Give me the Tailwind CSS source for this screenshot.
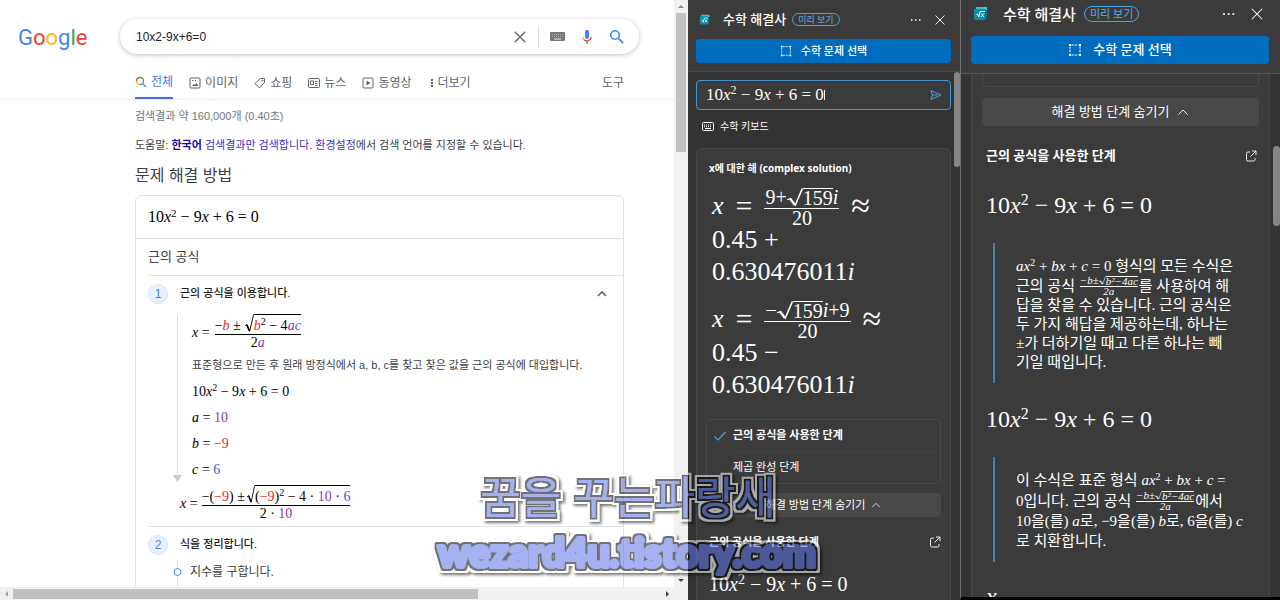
<!DOCTYPE html>
<html lang="ko">
<head>
<meta charset="utf-8">
<meta name="viewport" content="width=device-width, initial-scale=1">
<title>10x2-9x+6=0 - 검색</title>
<script src="https://cdn.jsdelivr.net/npm/@tailwindcss/browser@4"></script>
</head>
<body class="relative grid h-screen grid-cols-[688fr_272fr_320fr] overflow-hidden bg-[#333333] font-['Liberation_Sans','Noto_Sans_CJK_KR',sans-serif]">

<!-- Shared symbols -->
<svg class="hidden" aria-hidden="true">
  <symbol id="rad" viewBox="0 0 10 20" preserveAspectRatio="none"><path d="M0 12.5L2.2 11L5.2 18L9.6 .5" fill="none" stroke="currentColor" stroke-width="1"/><path d="M2 11.4L5 18" stroke="currentColor" stroke-width="1.6"/></symbol>
  <symbol id="solver" viewBox="0 0 16 16"><path d="M3 1h11v3H3z" fill="#35c3d0"/><path d="M1 3h11v11H3a2 2 0 0 1-2-2z" fill="#0e8ea3"/><path d="M12 4h2v8l-2 2z" fill="#0b6b86"/><path d="M3.500 8.500l1-.5 1.300 3L7 5.500h5M8 7.500l3 3.500M11 7.500L8 11" fill="none" stroke="#e8fbff" stroke-width="1"/></symbol>
  <symbol id="select" viewBox="0 0 14 14"><path d="M3.500 2h7M3.500 12h7M2 3.500v7M12 3.500v7" fill="none" stroke="currentColor" stroke-width="1" stroke-dasharray="2.200 1"/><path d="M1 1h2v2H1zM11 1h2v2h-2zM1 11h2v2H1zM11 11h2v2h-2z" fill="currentColor"/></symbol>
  <symbol id="dots" viewBox="0 0 12 12"><path d="M1 5.300h1.500v1.500H1zM5 5.300h1.500v1.500H5zM9 5.300h1.500v1.500H9z" fill="currentColor"/></symbol>
  <symbol id="close" viewBox="0 0 12 12"><path d="M1.500 1.500l9 9M10.500 1.500l-9 9" stroke="currentColor" stroke-width=".9"/></symbol>
  <symbol id="up" viewBox="0 0 12 12"><path d="M1.500 8.500L6 4l4.500 4.500" fill="none" stroke="currentColor" stroke-width=".9"/></symbol>
  <symbol id="open" viewBox="0 0 12 12"><path d="M5 2H3a1.500 1.500 0 0 0-1.500 1.500v6A1.500 1.500 0 0 0 3 11h5.500A1.500 1.500 0 0 0 10 9.500V8M7 1h4v4M11 1L5.500 6.500" fill="none" stroke="currentColor" stroke-width=".9"/></symbol>
</svg>

<!-- Search results -->
<main class="flex min-w-0 flex-col overflow-hidden bg-white">
  <div class="flex min-h-0 flex-1">
    <div class="min-w-0 flex-1 overflow-hidden">
      <header class="flex items-center pt-[19px]">
        <a href="#" aria-label="Google" class="ml-[18px] w-[102px] pt-[2px] font-['Roboto',sans-serif] text-[22px] leading-[33px]"><span class="text-[#4285f4]">G</span><span class="text-[#ea4335]">o</span><span class="text-[#fbbc05]">o</span><span class="text-[#4285f4]">g</span><span class="text-[#34a853]">l</span><span class="text-[#ea4335]">e</span></a>
        <form class="mr-[35px] flex h-[35px] flex-1 items-center rounded-full bg-white pr-[14px] pl-4 shadow-[0_1px_5px_rgba(32,33,36,0.28)]">
          <input type="text" aria-label="검색" value="10x2-9x+6=0" class="min-w-0 flex-1 text-[12px] text-[#202124] outline-none">
          <button type="button" aria-label="지우기" class="text-[#70757a]"><svg class="size-[14px]" viewBox="0 0 12 12"><path d="M1.500 1.500l9 9M10.500 1.500l-9 9" stroke="currentColor" stroke-width="1.400"/></svg></button>
          <span class="mx-[11px] h-[22px] w-px bg-[#dadce0]"></span>
          <button type="button" aria-label="키보드"><svg class="h-[9px] w-[15px]" viewBox="0 0 15 9"><rect width="15" height="9" rx="1" fill="#777"/><path d="M2 2.500h11M2 4.500h11" stroke="#aaa" stroke-dasharray="1 1"/><path d="M4 7h7" stroke="#eee"/></svg></button>
          <button type="button" aria-label="음성 검색" class="ml-[14px]"><svg class="size-4" viewBox="0 0 24 24"><path fill="#4285f4" d="M12 15c1.700 0 3-1.300 3-3V4c0-1.700-1.300-3-3-3S9 2.300 9 4v8c0 1.700 1.300 3 3 3z"/><path fill="#34a853" d="M11 19h2v4h-2z"/><path fill="#fbbc05" d="M7 12H5c0 1.900.8 3.700 2 5l1.500-1.400C7.500 14.700 7 13.400 7 12z"/><path fill="#ea4335" d="M12 17c-1.400 0-2.600-.6-3.500-1.500L7 17c1.300 1.300 3 2 5 2 3.900 0 7-3.100 7-7h-2c0 2.800-2.200 5-5 5z"/></svg></button>
          <button type="submit" aria-label="검색하기" class="ml-[14px]"><svg class="size-4" viewBox="0 0 16 16"><circle cx="6" cy="6" r="4.300" fill="none" stroke="#4285f4" stroke-width="1.600"/><path d="M9.200 9.200l5 5" stroke="#4285f4" stroke-width="1.800"/></svg></button>
        </form>
      </header>
      <nav class="mt-3 flex h-[34px] border-b border-[#ebebeb] pr-[50px] pl-[135px] text-[12px] text-[#5f6368]">
        <a href="#" class="mr-4 flex items-center gap-1 border-b-2 border-[#3f6fe0] text-[#3f74e8]"><svg class="size-3" viewBox="0 0 12 12" fill="none" stroke-width="1.300"><path d="M1.500 5A3.500 3.500 0 0 1 5 1.500" stroke="#ea4335"/><path d="M5 1.500A3.500 3.500 0 0 1 8.500 5" stroke="#34a853"/><path d="M8.500 5A3.500 3.500 0 0 1 5 8.500M7.500 7.500l3.500 3.500" stroke="#4285f4"/><path d="M5 8.500A3.500 3.500 0 0 1 1.500 5" stroke="#fbbc05"/></svg>전체</a>
        <a href="#" class="mr-4 flex items-center gap-1"><svg class="size-3" viewBox="0 0 12 12" fill="none" stroke="currentColor"><rect x="1" y="1" width="10" height="10" rx="1"/><path d="M3 9l2-2 1 1 1.500-2L9.500 9z" fill="currentColor" stroke="none"/><path d="M3 3.500h1.500M6 3.500h1"/></svg>이미지</a>
        <a href="#" class="mr-4 flex items-center gap-1"><svg class="size-3" viewBox="0 0 12 12" fill="none" stroke="currentColor"><path d="M6.500 1.500h4v4L5.500 11 1 6.500z" stroke-linejoin="round"/><circle cx="8.500" cy="3.500" r=".5"/></svg>쇼핑</a>
        <a href="#" class="mr-4 flex items-center gap-1"><svg class="size-3" viewBox="0 0 12 12" fill="none" stroke="currentColor"><rect x=".5" y="1.500" width="11" height="9" rx="1"/><path d="M2.500 4h3v3.500h-3zM7 4.500h2.500M7 6.500h2.500M7 8.500h2.500"/></svg>뉴스</a>
        <a href="#" class="mr-[18px] flex items-center gap-1"><svg class="size-3" viewBox="0 0 12 12" fill="none" stroke="currentColor"><rect x="1" y="1" width="10" height="10" rx="1"/><path d="M4.500 3.500v5L8.500 6z" fill="currentColor" stroke="none"/></svg>동영상</a>
        <a href="#" class="flex items-center gap-1"><svg class="h-3 w-1" viewBox="0 0 4 12" fill="currentColor"><path d="M1 2h2v2H1zM1 5h2v2H1zM1 8h2v2H1z"/></svg>더보기</a>
        <a href="#" class="ml-auto flex items-center">도구</a>
      </nav>
      <div class="pr-[50px] pl-[135px]">
        <p class="mt-[7px] text-[11px] leading-[18px] text-[#70757a]">검색결과 약 160,000개 (0.40초)</p>
        <p class="mt-[11px] text-[11px] leading-[18px] whitespace-nowrap text-[#3c4043]">도움말: <a href="#" class="text-[#1a0dab]"><b>한국어</b></a> <a href="#" class="text-[#4130c4]">검색결과만 검색합니다.</a> <a href="#" class="text-[#4130c4]">환경설정</a>에서 검색 언어를 지정할 수 있습니다.</p>
        <h2 class="mt-[10px] text-[16px] leading-6 text-[#3c4043]">문제 해결 방법</h2>
        <section class="mt-[7px] h-[440px] rounded-t-md border border-[#dfe1e5]">
          <div class="flex h-[43px] items-center border-b border-[#dfe1e5] pl-3 font-['Liberation_Serif',serif] text-[16px] text-black"><span>10<i>x</i><sup class="text-[11px]">2</sup> − 9<i>x</i> + 6 = 0</span></div>
          <div class="ml-3 flex h-[37px] items-center border-b border-[#dfe1e5] text-[13px] text-[#3c4043]">근의 공식</div>
          <div class="ml-3">
            <div class="flex h-[35px] items-center pr-[15px] text-[11px] font-medium text-[#202124]">
              <span class="mr-3 flex size-5 items-center justify-center rounded-full border border-[#d2e3fc] bg-[#e8f0fe] text-[12px] font-normal text-[#4285f4]">1</span>근의 공식을 이용합니다.
              <button type="button" aria-label="접기" class="ml-auto text-[#5f6368]"><svg class="size-3" viewBox="0 0 12 12"><path d="M2 8l4-4 4 4" fill="none" stroke="currentColor" stroke-width="1.600"/></svg></button>
            </div>
            <div class="flex font-['Liberation_Serif','Noto_Sans_CJK_KR',serif] text-[14px] whitespace-nowrap text-black">
              <div class="mt-1 ml-[25px] flex h-[167px] w-[9px] flex-col items-center"><span class="w-px flex-1 bg-[#dadce0]"></span><svg class="h-[7px] w-[9px]" viewBox="0 0 9 7"><path d="M0 0h9L4.500 7z" fill="#c8cacd"/></svg></div>
              <div class="ml-[10px]">
                <div class="flex h-[42px] items-center gap-[5px]"><span><i>x</i> =</span>
                  <span class="flex flex-col items-center leading-4"><span class="flex border-b border-black"><span class="pt-1">−<i class="text-[#d93025]">b</i> ±</span><svg class="ml-1 h-[19px] w-[9px]"><use href="#rad"/></svg><span class="border-t border-black pt-[3px]"><i class="text-[#d93025]">b</i><sup class="text-[10px]">2</sup> − 4<i class="text-[#9334a6]">a</i><i class="text-[#3b5bdb]">c</i></span></span><span>2<i class="text-[#9334a6]">a</i></span></span>
                </div>
                <p class="mt-1 font-['Liberation_Sans','Noto_Sans_CJK_KR',sans-serif] text-[11px] leading-[16px] text-[#3c4043]">표준형으로 만든 후 원래 방정식에서 a, b, c를 찾고 찾은 값을 근의 공식에 대입합니다.</p>
                <p class="mt-[6px] leading-[26px]">10<i>x</i><sup class="text-[10px]">2</sup> − 9<i>x</i> + 6 = 0</p>
                <p class="leading-[26px]"><i>a</i> = <span class="text-[#9334a6]">10</span></p>
                <p class="leading-[26px]"><i>b</i> = <span class="text-[#d93025]">−9</span></p>
                <p class="leading-[26px]"><i>c</i> = <span class="text-[#3b5bdb]">6</span></p>
              </div>
            </div>
            <div class="ml-8 flex h-[40px] items-center gap-1 font-['Liberation_Serif',serif] text-[14px] whitespace-nowrap text-black"><span><i>x</i> =</span>
              <span class="flex flex-col items-center leading-4"><span class="flex border-b border-black"><span class="pt-1">−(<span class="text-[#d93025]">−9</span>) ±</span><svg class="ml-[2px] h-[19px] w-2"><use href="#rad"/></svg><span class="border-t border-black pt-[3px]">(<span class="text-[#d93025]">−9</span>)<sup class="text-[10px]">2</sup> − 4 · <span class="text-[#9334a6]">10</span> · <span class="text-[#3b5bdb]">6</span></span></span><span>2 · <span class="text-[#9334a6]">10</span></span></span>
            </div>
            <div class="mt-[3px] flex h-[36px] items-center border-t border-[#dfe1e5] text-[11px] font-medium text-[#202124]"><span class="mr-3 flex size-5 items-center justify-center rounded-full border border-[#d2e3fc] bg-[#e8f0fe] text-[12px] font-normal text-[#4285f4]">2</span>식을 정리합니다.</div>
            <div class="flex text-[12px] text-[#3c4043]"><svg class="ml-[25px] h-[26px] w-[9px]" viewBox="0 0 9 26"><path d="M4.500 0v26" stroke="#dadce0"/><circle cx="4.500" cy="10" r="3.500" fill="#fff" stroke="#4285f4"/></svg><span class="ml-2 leading-5">지수를 구합니다.</span></div>
          </div>
        </section>
      </div>
    </div>
    <div class="flex w-[14px] flex-col items-center justify-between bg-[#f1f1f1]" aria-hidden="true">
      <svg class="h-[13px] w-[6px]" viewBox="0 0 6 13"><path d="M0 8h6L3 5z" fill="#8b8b8b"/></svg>
      <span class="h-[139px] w-[10px] bg-[#c1c1c1]"></span>
      <span class="flex-1"></span>
      <svg class="h-[13px] w-[6px]" viewBox="0 0 6 13"><path d="M0 5h6L3 8z" fill="#444"/></svg>
    </div>
  </div>
  <div class="flex h-[13px] items-center bg-[#f1f1f1] pr-[14px]" aria-hidden="true">
    <svg class="h-[6px] w-[13px]" viewBox="0 0 13 6"><path d="M8 0v6L5 3z" fill="#a3a3a3"/></svg>
    <span class="h-[10px] w-[69%] bg-[#c1c1c1]"></span><span class="flex-1"></span>
    <svg class="h-[6px] w-[13px]" viewBox="0 0 13 6"><path d="M5 0v6l3-3z" fill="#444"/></svg>
  </div>
</main>

<!-- Math solver, top of the pane -->
<aside class="flex min-w-0 flex-col overflow-hidden bg-[#333333] font-['Noto_Sans','Noto_Sans_CJK_KR',sans-serif] text-white">
  <header class="flex h-[72px] flex-col border-b border-[#4a4a4a] bg-[#3b3b3b] pr-[9px] pl-2">
    <div class="flex h-[39px] items-center pr-[5px] pl-[3px]"><svg class="size-3"><use href="#solver"/></svg><h2 class="ml-3 text-[13px] font-medium">수학 해결사</h2><span class="ml-[6px] rounded-full border border-[#4da3e0] px-[5px] text-[9px] leading-[11px] text-[#5caee8]">미리 보기</span>
      <button type="button" aria-label="더보기" class="ml-auto"><svg class="size-3"><use href="#dots"/></svg></button><button type="button" aria-label="닫기" class="ml-3"><svg class="size-3"><use href="#close"/></svg></button></div>
    <button type="button" class="flex h-6 items-center justify-center gap-[9px] rounded-sm bg-[#006cbe] text-[11px] font-medium"><svg class="size-3"><use href="#select"/></svg>수학 문제 선택</button>
  </header>
  <div class="flex min-h-0 flex-1">
    <div class="min-w-0 flex-1 overflow-hidden pt-2 pr-[3px] pl-2">
      <div class="flex h-[30px] items-center rounded-sm border border-[#4494d0] bg-[#3b3b3b] pr-2 pl-[9px]">
        <div role="textbox" tabindex="0" aria-label="수식" class="flex-1 font-['Liberation_Serif',serif] text-[17px] whitespace-nowrap">10<i>x</i><sup class="text-[12px]">2</sup> − 9<i>x</i> + 6 = 0<span class="inline-block h-[10px] w-px bg-white"></span></div>
        <button type="button" aria-label="풀기" class="text-[#4aa0e0]"><svg class="size-3" viewBox="0 0 12 12"><path d="M1 1.500L11 6 1 10.500 2.500 6zM2.500 6H8" fill="none" stroke="currentColor"/></svg></button>
      </div>
      <button type="button" class="flex h-[33px] items-center gap-[6px] pl-[6px] text-[10px]"><svg class="h-[9px] w-3" viewBox="0 0 12 9" fill="none" stroke="currentColor"><rect x=".5" y=".5" width="11" height="8" rx="1"/><path d="M2 3h8M2 4.700h8" stroke-dasharray="1 1"/><path d="M3 6.500h6"/></svg>수학 키보드</button>
      <section class="mt-[5px] h-[500px] rounded-t-md border border-[#474747] bg-[#3b3b3b] px-[9px]">
        <h3 class="mt-[11px] ml-[3px] text-[10px] leading-4 font-bold">x에 대한 해 (complex solution)</h3>
        <div class="mt-3 ml-[6px] font-['Liberation_Serif',serif] text-[26px] leading-8">
          <div class="flex h-[36px] items-center gap-3"><i>x</i><span class="text-[30px]">=</span><span class="flex flex-col items-center pt-[2px] text-[20px] leading-[18px]"><span class="flex border-b border-white px-px pb-px"><span>9+</span><svg class="h-[19px] w-4"><use href="#rad"/></svg><span class="border-t border-white">159</span><i>i</i></span><span>20</span></span><span class="text-[34px]">≈</span></div>
          <p>0.45 +</p><p>0.630476011<i>i</i></p>
          <div class="mt-[13px] flex h-[36px] items-center gap-3"><i>x</i><span class="text-[30px]">=</span><span class="flex flex-col items-center pt-[2px] text-[20px] leading-[18px]"><span class="flex border-b border-white px-px pb-px"><span>−</span><svg class="h-[19px] w-4"><use href="#rad"/></svg><span class="border-t border-white">159</span><i>i</i>+9</span><span>20</span></span><span class="text-[34px]">≈</span></div>
          <p>0.45 −</p><p>0.630476011<i>i</i></p>
        </div>
        <ul class="mt-[18px] rounded-sm border border-[#484848] text-[11px]">
          <li class="flex h-8 items-center font-bold"><svg class="mx-[7px] size-3" viewBox="0 0 12 12"><path d="M.5 6.500L4 10l7.500-8" fill="none" stroke="#4aa0e0" stroke-width="1.200"/></svg><span class="flex h-full flex-1 items-center border-b border-[#444444]">근의 공식을 사용한 단계</span></li>
          <li class="flex h-[31px] items-center pl-[26px]">제곱 완성 단계</li>
        </ul>
        <button type="button" class="mt-[9px] flex h-6 w-full items-center justify-center gap-[6px] rounded-sm bg-[#484848] text-[11px]">해결 방법 단계 숨기기<svg class="size-[10px]"><use href="#up"/></svg></button>
        <div class="mt-4 flex h-[18px] items-center justify-between pl-[3px]"><h3 class="text-[11px] font-bold">근의 공식을 사용한 단계</h3><a href="#" aria-label="새 창에서 열기"><svg class="size-3"><use href="#open"/></svg></a></div>
        <p class="mt-[17px] ml-[3px] font-['Liberation_Serif',serif] text-[20px] leading-8 whitespace-nowrap">10<i>x</i><sup class="text-[14px]">2</sup> − 9<i>x</i> + 6 = 0</p>
      </section>
    </div>
    <div class="w-[6px]" aria-hidden="true"><div class="h-[95px] rounded-full bg-[#858585]"></div></div>
  </div>
</aside>

<!-- Math solver, scrolled to the steps -->
<aside class="flex min-w-0 flex-col overflow-hidden border-b-3 border-l border-b-black border-l-[#707070] bg-[#333333] font-['Noto_Sans','Noto_Sans_CJK_KR',sans-serif] text-white">
  <header class="flex h-[74px] flex-col border-b border-[#555555] bg-[#3b3b3b] pr-[11px] pl-[10px]">
    <div class="flex h-[36px] items-start pt-[6px] pr-[5px] pl-[2px]"><div class="flex h-4 flex-1 items-center"><svg class="size-4"><use href="#solver"/></svg><h2 class="ml-[14px] text-[15px] font-medium">수학 해결사</h2><span class="ml-2 rounded-full border border-[#4da3e0] px-[5px] text-[11px] leading-[14px] text-[#5caee8]">미리 보기</span>
      <button type="button" aria-label="더보기" class="ml-auto"><svg class="size-[14px]"><use href="#dots"/></svg></button><button type="button" aria-label="닫기" class="ml-[14px]"><svg class="size-[14px]"><use href="#close"/></svg></button></div></div>
    <button type="button" class="flex h-7 items-center justify-center gap-[11px] rounded-sm bg-[#006cbe] text-[13px] font-medium"><svg class="size-[14px]"><use href="#select"/></svg>수학 문제 선택</button>
  </header>
  <div class="flex min-h-0 flex-1">
    <div class="min-w-0 flex-1 overflow-hidden pr-[3px] pl-[10px]">
      <section class="border-x border-[#474747] bg-[#3b3b3b] px-[10px]">
        <div class="h-[13px] rounded-b-sm border border-t-0 border-[#4a4a4a]"></div>
        <button type="button" class="mt-[11px] flex h-7 w-full items-center justify-center gap-2 rounded-sm bg-[#484848] text-[13px]">해결 방법 단계 숨기기<svg class="size-3"><use href="#up"/></svg></button>
        <div class="mt-5 flex h-5 items-center justify-between pr-[2px] pl-1"><h3 class="text-[13px] font-bold">근의 공식을 사용한 단계</h3><a href="#" aria-label="새 창에서 열기"><svg class="size-3"><use href="#open"/></svg></a></div>
        <p class="mt-[23px] ml-1 font-['Liberation_Serif',serif] text-[24px] leading-8 whitespace-nowrap">10<i>x</i><sup class="text-[16px]">2</sup> − 9<i>x</i> + 6 = 0</p>
        <blockquote class="mt-[22px] ml-[11px] h-[140px] border-l-2 border-[#4a7fa8] pt-[14px] pl-[21px] font-['Liberation_Serif','Noto_Sans_CJK_KR',serif] text-[15px] leading-[19px] whitespace-nowrap">
          <p><i>ax</i><sup class="text-[10px]">2</sup> + <i>bx</i> + <i>c</i> = 0 형식의 모든 수식은</p>
          <p class="flex h-5 items-center">근의 공식&nbsp;<span class="mx-px inline-flex flex-col items-center text-[11px] leading-[9px]"><span class="flex border-b border-white"><i>−b±</i><svg class="h-[9px] w-[7px]"><use href="#rad"/></svg><i class="border-t border-white">b²−4ac</i></span><i>2a</i></span>를 사용하여 해</p>
          <p>답을 찾을 수 있습니다. 근의 공식은</p><p>두 가지 해답을 제공하는데, 하나는</p><p>±가 더하기일 때고 다른 하나는 빼</p><p>기일 때입니다.</p>
        </blockquote>
        <p class="mt-5 ml-1 font-['Liberation_Serif',serif] text-[24px] leading-8 whitespace-nowrap">10<i>x</i><sup class="text-[16px]">2</sup> − 9<i>x</i> + 6 = 0</p>
        <blockquote class="mt-[22px] ml-[11px] h-[105px] border-l-2 border-[#4a7fa8] pt-[13px] pl-[21px] font-['Liberation_Serif','Noto_Sans_CJK_KR',serif] text-[15px] leading-5 whitespace-nowrap">
          <p>이 수식은 표준 형식 <i>ax</i><sup class="text-[10px]">2</sup> + <i>bx</i> + <i>c</i> =</p>
          <p class="flex h-[21px] items-center">0입니다. 근의 공식&nbsp;<span class="mx-px inline-flex flex-col items-center text-[11px] leading-[9px]"><span class="flex border-b border-white"><i>−b±</i><svg class="h-[9px] w-[7px]"><use href="#rad"/></svg><i class="border-t border-white">b²−4ac</i></span><i>2a</i></span>에서</p>
          <p>10을(를) <i>a</i>로, −9을(를) <i>b</i>로, 6을(를) <i>c</i></p><p>로 치환합니다.</p>
        </blockquote>
        <p class="mt-[18px] ml-1 font-['Liberation_Serif',serif] text-[24px] leading-8"><i>x</i></p>
      </section>
    </div>
    <div class="w-[7px] pt-[72px]" aria-hidden="true"><div class="h-20 rounded-full bg-[#858585]"></div></div>
  </div>
</aside>

<!-- Watermark over both panes -->
<svg class="pointer-events-none absolute bottom-[15px] left-[423px] h-[120px] w-[410px] opacity-55" viewBox="0 0 410 120">
  <defs>
    <filter id="outline" x="0" y="0" width="410" height="120" filterUnits="userSpaceOnUse">
      <feMorphology in="SourceAlpha" operator="dilate" radius="1.500" result="inner"/>
      <feMorphology in="SourceAlpha" operator="dilate" radius="3.500" result="outer"/>
      <feFlood flood-color="#000"/><feComposite in2="inner" operator="in" result="dark"/>
      <feFlood flood-color="#fff"/><feComposite in2="outer" operator="in" result="light"/>
      <feGaussianBlur in="outer" stdDeviation="1.500"/><feOffset dx="2" dy="2" result="shade"/>
      <feMerge><feMergeNode in="shade"/><feMergeNode in="light"/><feMergeNode in="dark"/><feMergeNode in="SourceGraphic"/></feMerge>
    </filter>
  </defs>
  <g filter="url(#outline)" fill="#5b73e4" text-anchor="middle">
    <text x="205" y="49" class="font-['Noto_Sans_CJK_KR',sans-serif] text-[44px]">꿈을 꾸는파랑새</text>
    <text x="204" y="102" stroke="#5b73e4" stroke-width="4" stroke-linejoin="round" class="font-['Lato',sans-serif] text-[39px] font-black">wezard4u.tistory.com</text>
  </g>
</svg>
</body>
</html>
